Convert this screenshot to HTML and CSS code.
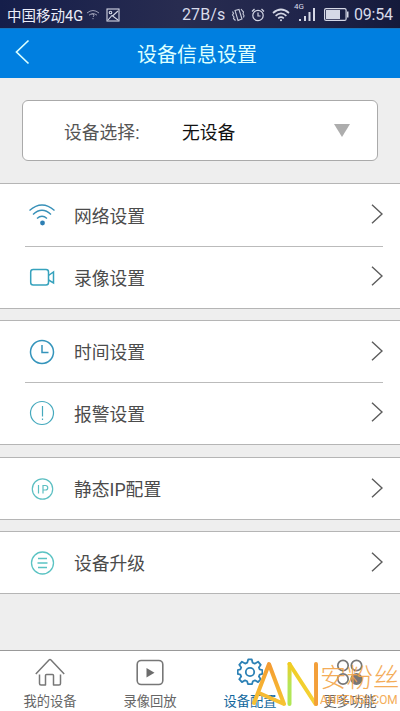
FILE: index.html
```html
<!DOCTYPE html>
<html lang="zh-CN">
<head>
<meta charset="utf-8">
<title>设备信息设置</title>
<link rel="stylesheet" href="styles.css">
</head>
<body>
<div class="screen">
  <div class="status">
    <span class="carrier">中国移动4G</span>
    <svg class="s-wifi" width="14" height="11" viewBox="0 0 14 11" fill="none" stroke="#9a9db5" stroke-width="1"><path d="M1 4Q7-1 13 4M3 6.2Q7 3 11 6.2M5.500 5.500Q7 4 8 6Q8 7 7 8M7 9v1.200"/></svg>
    <svg class="s-pic" width="14" height="14" viewBox="0 0 14 14" fill="none" stroke="#d5d8e6" stroke-width="1.100"><rect x="1" y="1" width="12" height="12"/><circle cx="4.500" cy="4.500" r="1.300"/><path d="M2 12L6 7.500l6 4.500M6.500 8L12 3"/></svg>
    <span class="speed">27B/s</span>
    <svg class="s-vib" width="14" height="14" viewBox="0 0 14 14" fill="none" stroke="#c8cbdb" stroke-width="1.100"><path d="M4 2.500l4-1 3 9.500-4 1.500zM1.500 3.500l1 2-1 1.500 1.500 2-.5 1.500 2 2M10 1l1.500 2 1 1-.5 2 1 1.500-.5 2"/></svg>
    <svg class="s-alarm" width="14" height="14" viewBox="0 0 14 14" fill="none" stroke="#d5d8e6" stroke-width="1.200"><circle cx="7" cy="7.500" r="5.200"/><path d="M7 4.500V8h2.500M1 3.500L3.500 1M10.500 1L13 3.500"/></svg>
    <svg class="s-net" width="18" height="14" viewBox="0 0 18 14" fill="none" stroke="#d5d8e6" stroke-width="1.700"><path d="M1 5Q9-2 17 5M3.600 7.800Q9 3 14.400 7.800M6.200 10.300Q9 8 11.800 10.300"/><circle cx="9" cy="12.300" r="1" fill="#d5d8e6" stroke="none"/></svg>
    <span class="signal"><span class="g4">4G</span><svg width="22" height="17" viewBox="0 0 22 17" fill="#d5d8e6"><path d="M5 13h2v2H5zM10 10h2v5h-2zM14.500 6h2v9h-2zM19 2h2v13h-2z"/></svg></span>
    <svg class="s-bat" width="25" height="13" viewBox="0 0 25 13"><rect x=".6" y=".6" width="21.500" height="11.800" rx="1.500" fill="none" stroke="#d5d8e6" stroke-width="1.200"/><path d="M2 2h14v9H2z" fill="#d5d8e6"/><path d="M23 3.500h1.500v6H23z" fill="#d5d8e6"/></svg>
    <span class="clock">09:54</span>
  </div>
  <header class="bar">
    <svg class="back" width="16" height="26" viewBox="0 0 16 26" fill="none" stroke="#d9ffff" stroke-width="1.700"><path d="M13.500 1.500L1.500 13l12 11.500"/></svg>
    <h1>设备信息设置</h1>
  </header>
  <main>
    <div class="picker">
      <span class="picker-label">设备选择:</span><span class="picker-value">无设备</span>
      <svg class="caret" width="16" height="13" viewBox="0 0 16 13" fill="#adadad"><path d="M0 0h16L8 13z"/></svg>
    </div>
    <section class="group">
      <div class="row"><svg class="ico" viewBox="0 0 28 28" fill="none" stroke="#3790b8" stroke-width="1.400"><path d="M1.500 9.500Q14-1.500 26.500 9.500M5 13.500Q14 5 23 13.500M9 17.500Q14 13 19 17.500"/><circle cx="14.500" cy="22" r="2.400" fill="#2d7fb3" stroke="none"/></svg><span>网络设置</span><svg class="arrow" viewBox="0 0 12 20"><path d="M1 .8L11 10 1 19.200"/></svg></div>
      <div class="row"><svg class="ico" viewBox="0 0 28 28" fill="none" stroke="#36a2bd" stroke-width="1.500"><rect x="2.700" y="6.500" width="17.800" height="15.500" rx="2.500"/><path d="M20.500 12.500l5-3.500v11l-5-3"/></svg><span>录像设置</span><svg class="arrow" viewBox="0 0 12 20"><path d="M1 .8L11 10 1 19.200"/></svg></div>
    </section>
    <section class="group alarms">
      <div class="row"><svg class="ico" viewBox="0 0 28 28" fill="none" stroke="#3494bb" stroke-width="1.500"><circle cx="14" cy="14" r="11.500"/><path d="M14 7v7.500h6.500"/></svg><span>时间设置</span><svg class="arrow" viewBox="0 0 12 20"><path d="M1 .8L11 10 1 19.200"/></svg></div>
      <div class="row"><svg class="ico" viewBox="0 0 28 28" fill="none" stroke="#45a9bd" stroke-width="1.200"><circle cx="14" cy="14" r="11.500"/><path d="M14.500 7v10.500M14.500 19.500v1.500"/></svg><span>报警设置</span><svg class="arrow" viewBox="0 0 12 20"><path d="M1 .8L11 10 1 19.200"/></svg></div>
    </section>
    <section class="group single">
      <div class="row"><svg class="ico" viewBox="0 0 28 28" fill="none" stroke="#5cbfc2" stroke-width="1.200"><circle cx="14.500" cy="14" r="10.200"/><path d="M10.500 10v8.500M15 18.500v-8h2.500a2.200 2.200 0 0 1 0 4.500H15"/></svg><span>静态IP配置</span><svg class="arrow" viewBox="0 0 12 20"><path d="M1 .8L11 10 1 19.200"/></svg></div>
    </section>
    <section class="group single">
      <div class="row"><svg class="ico" viewBox="0 0 28 28" fill="none" stroke="#5bc3c3" stroke-width="1.300"><circle cx="14.500" cy="14" r="11"/><path d="M10 9.500h9M9.500 14h10M10 18.500h9"/></svg><span>设备升级</span><svg class="arrow" viewBox="0 0 12 20"><path d="M1 .8L11 10 1 19.200"/></svg></div>
    </section>
  </main>
  <nav class="tabs">
    <div class="tab"><svg width="30" height="30" viewBox="0 0 30 30" fill="none" stroke="#777" stroke-width="1.500" stroke-linejoin="round"><path d="M.8 17L14 3q1-.8 2 0L29.200 17M4.500 17.500v9q0 1.500 1.500 1.500h4.500V18.500q0-1 1-1h6q1 0 1 1V28H24q1.500 0 1.500-1.500v-9"/></svg><span>我的设备</span></div>
    <div class="tab"><svg width="30" height="30" viewBox="0 0 30 30" fill="none" stroke="#777" stroke-width="1.600"><rect x="2.200" y="3.500" width="25.600" height="24" rx="4"/><path d="M11.500 11v9.500l8-4.800z" fill="#6c6c6c" stroke="none"/></svg><span>录像回放</span></div>
    <div class="tab active"><svg width="26" height="30" viewBox="0 0 29 32" fill="none" stroke="#2b80b5" stroke-width="2" stroke-linejoin="round"><path d="M12.500 2h4l.9 3.700 2.300 1L23.500 4.500 26.500 8l-2.100 3 .9 2.200 3 .6v4.400l-3 .7-.9 2.200L26.500 24l-3 3.300-3.500-2-2.300 1-.9 3.200h-4.600l-.9-3.200-2.300-1-3.500 2L2.500 24l2.200-2.900-.9-2.200-3-.7v-4.400l3-.6.9-2.200L2.500 8l3-3.500 3.600 2.100 2.300-1z"/><circle cx="14.500" cy="16" r="4.700"/></svg><span>设备配置</span></div>
    <div class="tab"><svg width="30" height="30" viewBox="0 0 30 30" fill="none" stroke="#777" stroke-width="1.700"><circle cx="8" cy="8.500" r="5.200"/><circle cx="21.500" cy="8.500" r="5.200"/><circle cx="8" cy="22" r="5.200"/><circle cx="21.500" cy="22" r="5.200" fill="#777"/></svg><span>更多功能</span></div>
  </nav>
  <div class="mark">
    <svg width="68" height="48" viewBox="0 0 68 48" fill="none" stroke-width="4" stroke-linecap="round" stroke-linejoin="round">
      <defs>
        <linearGradient id="a" x1="0" y1="0" x2="0" y2="1"><stop offset="0" stop-color="#f49b32"/><stop offset="1" stop-color="#f7c332"/></linearGradient>
        <linearGradient id="n" gradientUnits="userSpaceOnUse" x1="37" y1="0" x2="65" y2="0"><stop offset="0" stop-color="#efcc22"/><stop offset="1" stop-color="#f5d237"/></linearGradient>
        <linearGradient id="g" gradientUnits="userSpaceOnUse" x1="0" y1="3" x2="0" y2="44"><stop offset="0" stop-color="#efcd23"/><stop offset=".55" stop-color="#b3e65a"/><stop offset="1" stop-color="#b0e754"/></linearGradient>
      </defs>
      <path stroke="url(#a)" d="M4 43L19 4l15 40L9 33"/><path stroke="url(#g)" d="M39.500 44l.1-40"/><path stroke="url(#n)" d="M39.500 4l26 40"/><path stroke="#f39f39" d="M66 4l.1 40"/>
    </svg>
    <div class="mark-text"><span class="mark-cn">安粉丝</span><span class="mark-en">ANFENSI.COM</span></div>
  </div>
</div>
</body>
</html>
```
FILE: styles.css
```css
* { box-sizing: border-box; }
body { margin: 0; font-family: Roboto, "Noto Sans CJK SC", sans-serif; }
.screen { position: relative; width: 400px; height: 711px; overflow: hidden; background: #eee; display: flex; flex-direction: column; }
.status { height: 28px; flex: none; display: flex; align-items: center; padding: 1px 0 0 7px; color: #d8dbea; background: linear-gradient(90deg, #151e4a, #282c50 45%, #20254b 75%, #151a3b); white-space: nowrap; }
.status > * { flex: none; }
.carrier { width: 75px; font-size: 14.5px; color: #eceefa; }
.s-wifi { margin-left: 4px; }
.s-pic { margin-left: 6px; }
.speed { width: 43px; margin-left: 62px; font-size: 16px; letter-spacing: .1px; }
.s-vib { margin-left: 6px; }
.s-alarm { margin-left: 6px; }
.s-net { margin-left: 7px; }
.signal { position: relative; width: 22px; height: 17px; margin-left: 4px; }
.signal svg { display: block; }
.g4 { position: absolute; left: 0; top: -4px; font-size: 8px; line-height: 9px; }
.s-bat { margin-left: 8px; }
.clock { margin-left: 5px; font-size: 16px; letter-spacing: -.2px; }
.bar { height: 50px; flex: none; display: flex; align-items: center; background: #007fe0; border-top: 1px solid #1774ba; }
.back { margin: -3px 0 0 15px; }
.bar h1 { margin: 2px 0 0 106px; font-size: 20px; line-height: 28px; font-weight: 400; color: #dcffff; }
main { flex: 1; }
.picker { display: flex; align-items: center; width: 356px; height: 61px; margin: 22px 0 22px 22px; padding: 0 27px 0 41px; background: #fff; border: 1px solid #aaa; border-radius: 6px; font-size: 17.8px; color: #555; }
.picker-label { width: 118px; }
.picker-value { color: #111; }
.caret { margin-left: auto; }
.group { background: #fff; border: solid #b5b5b5; border-width: 1px 0; margin-bottom: 11px; }
.alarms { margin-bottom: 12px; }
.row { height: 62px; display: flex; align-items: center; padding: 0 17px 0 28px; font-size: 17.8px; color: #4b4b4b; }
.row > span { margin-top: -1px; }
.alarms .row:first-child, .single .row { height: 61px; }
.row + .row { position: relative; }
.row + .row::before { content: ""; position: absolute; left: 25px; right: 17px; top: 0; height: 1px; background: #bbb; }
.ico { width: 28px; height: 28px; margin-right: 18px; }
.arrow { width: 12px; height: 20px; margin: -2px 0 0 auto; fill: none; stroke: #5c5c5c; stroke-width: 1.4; }
.tabs { height: 61px; flex: none; display: grid; grid-template-columns: repeat(4, 1fr); background: #fff; border-top: 1px solid #999; }
.tab { display: flex; flex-direction: column; align-items: center; padding-top: 6px; font-size: 13.3px; line-height: 18px; color: #666; }
.tab span { margin-top: 6px; }
.active { color: #12679c; }
.mark { position: absolute; left: 250px; top: 660px; display: flex; white-space: nowrap; }
.mark-text { display: flex; flex-direction: column; width: 80px; margin-left: 2px; padding-top: 2px; color: #f3a447; opacity: .9; }
.mark-cn { font-size: 26.5px; line-height: 31px; font-weight: 300; }
.mark-en { width: max-content; font-size: 13.5px; line-height: 13px; transform: scaleX(.88); transform-origin: left; }
```
